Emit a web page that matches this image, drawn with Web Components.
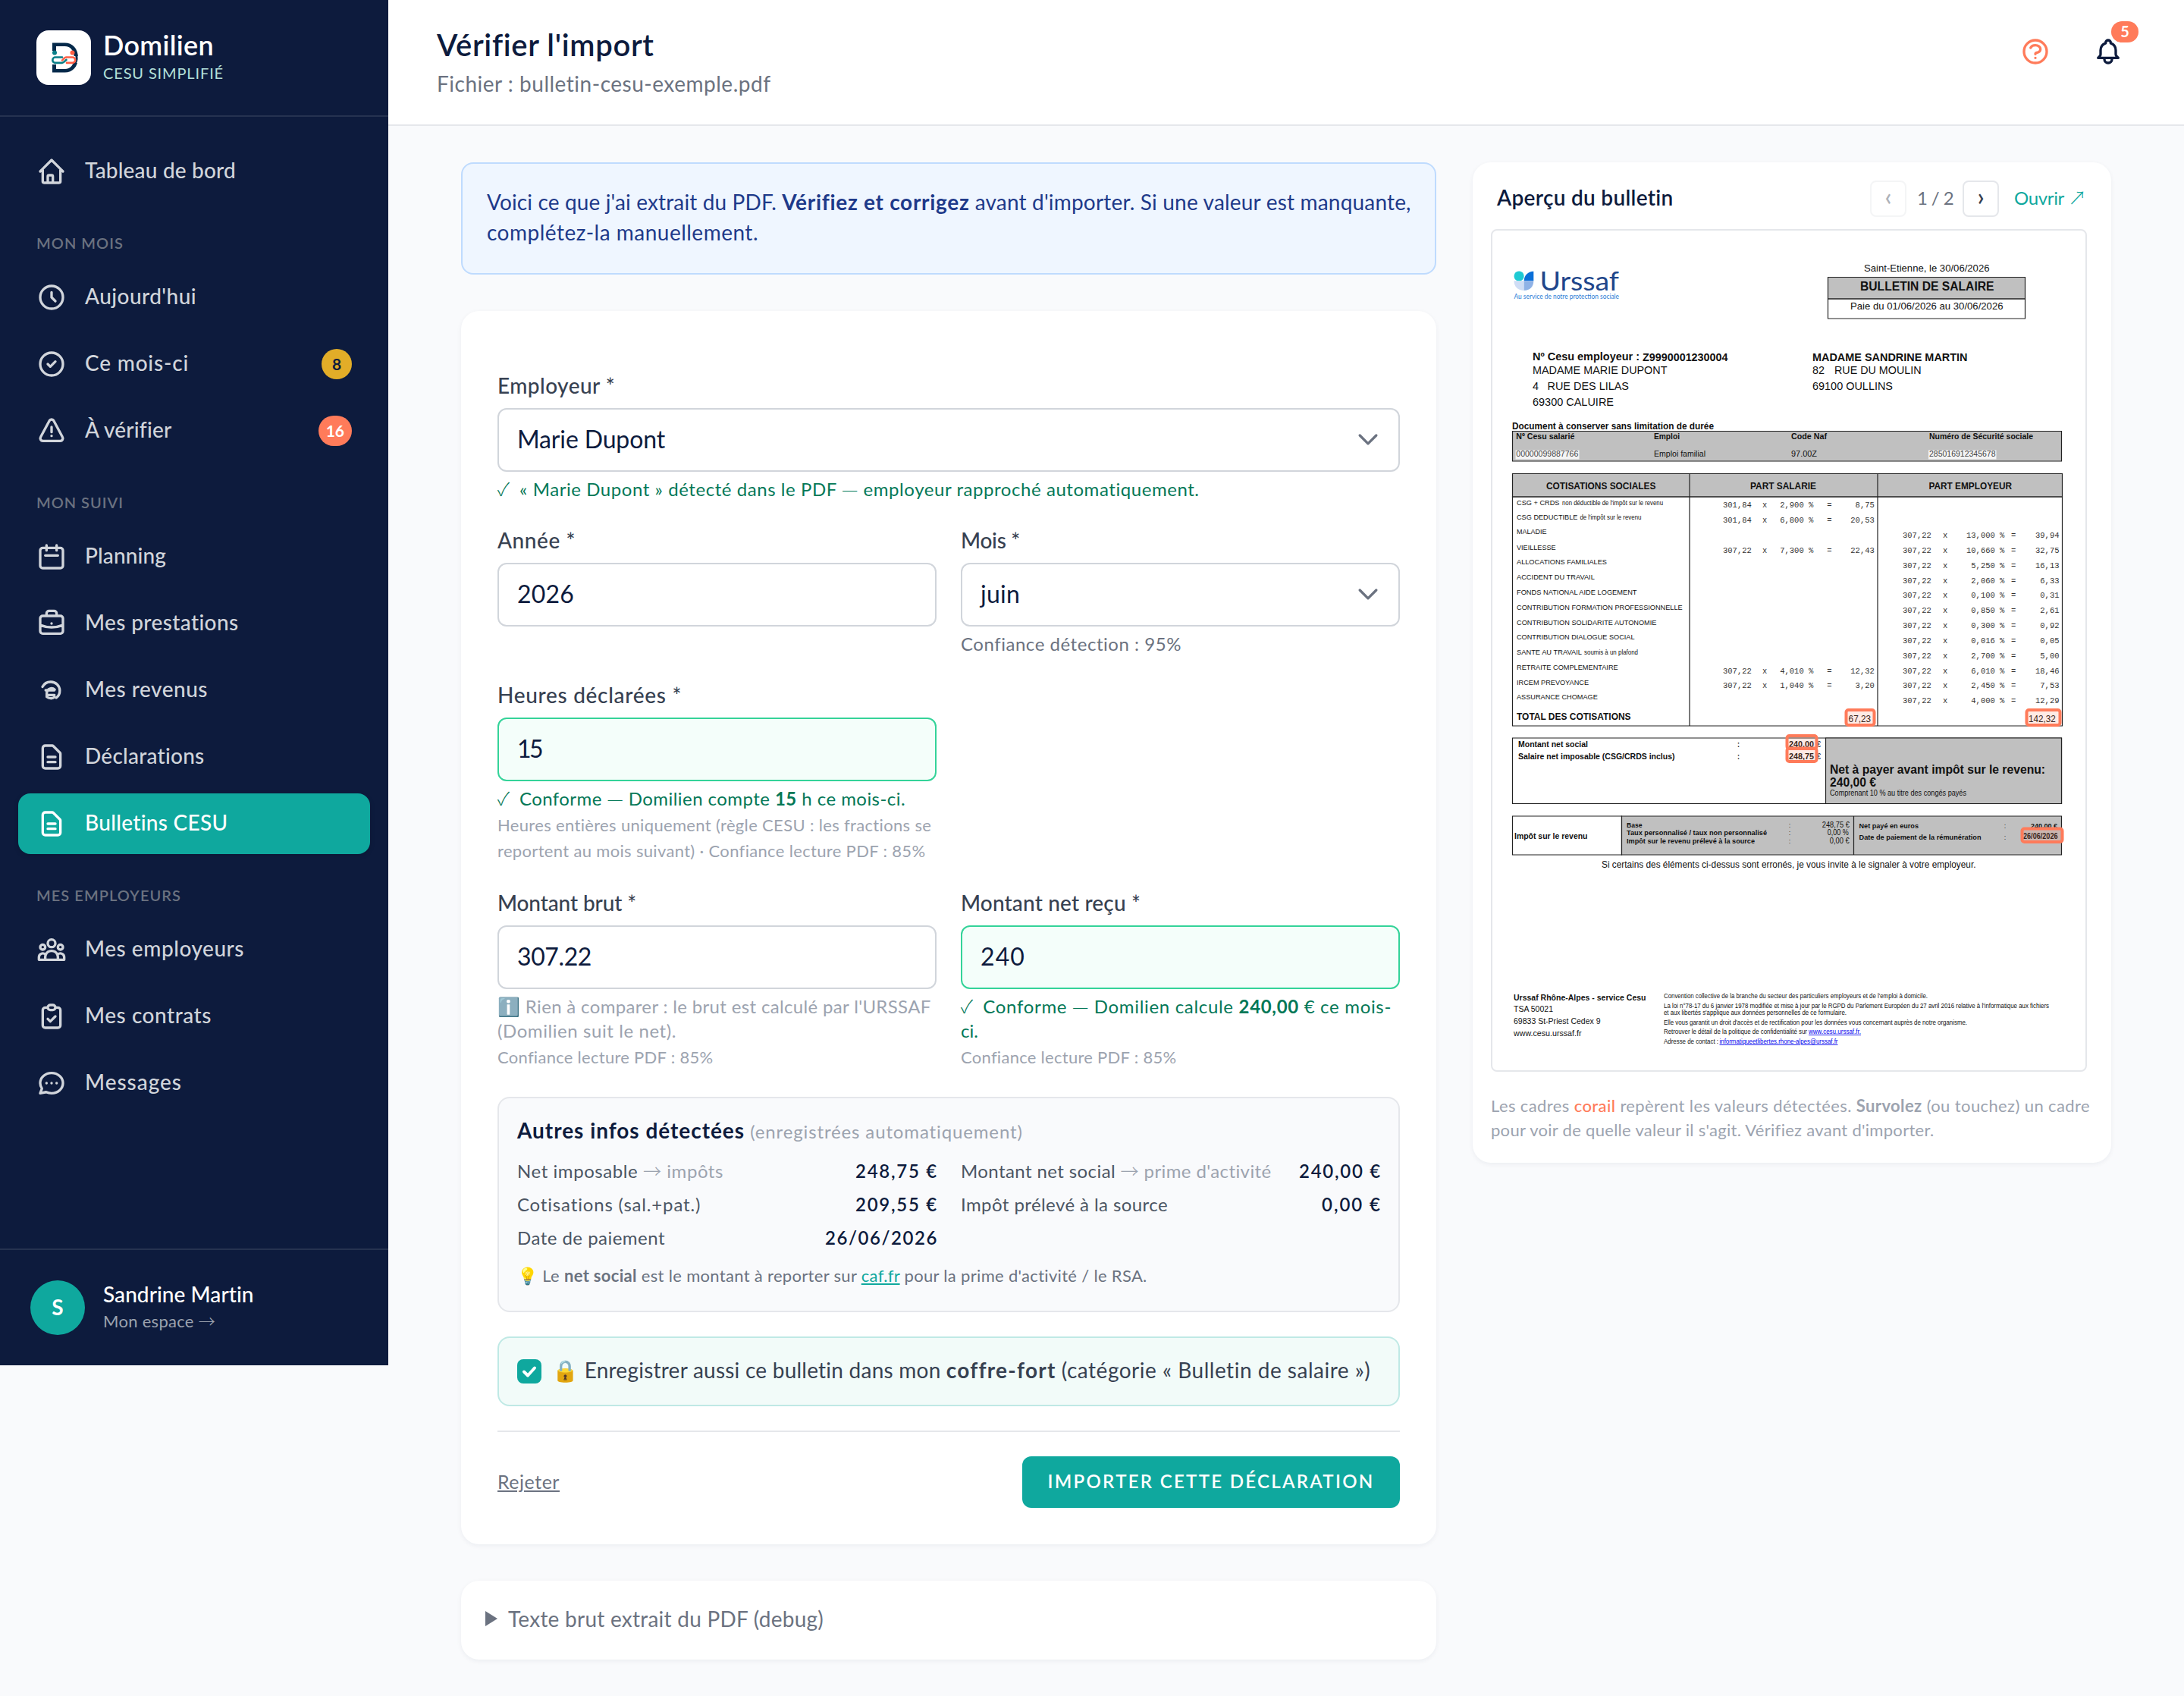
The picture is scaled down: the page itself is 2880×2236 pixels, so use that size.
<!DOCTYPE html>
<html lang="fr">
<head>
<meta charset="utf-8">
<title>Domilien - Vérifier l'import</title>
<style>
    html, body{
        margin: 0;
        background-color: #f9fafc;
    }
    body{
        --navy: #0d1b3d;
        --teal: #0fa89e;
        --coral: #ff7b5a;
        --gray-light: #9ca3af;
        --gray: #6b7280;
        --border: #e5e7eb;
        font-family: Lato, "Noto Sans", sans-serif;
        font-size: 28px;
        line-height: 40px;
        color: var(--navy);
        display: flex;
        align-items: flex-start;
    }
</style>
</head>
<body>
<app-sidebar></app-sidebar>
<app-main></app-main>

<script>
const ICONS = {
    home: "M3 12l2-2m0 0l7-7 7 7M5 10v10a1 1 0 001 1h12a1 1 0 001-1V10m0 0l2 2m-12 9v-5a1 1 0 011-1h2a1 1 0 011 1v5",
    clock: "M12 8v4l3 3m6-3a9 9 0 11-18 0 9 9 0 0118 0z",
    check: "M9 12l2 2 4-4m6 2a9 9 0 11-18 0 9 9 0 0118 0z",
    warning: "M12 9v4m0 3h.01m-6.938 4h13.856c1.54 0 2.502-1.667 1.732-3L13.732 4c-.77-1.333-2.694-1.333-3.464 0L3.34 17c-.77 1.333.192 3 1.732 3z",
    calendar: "M8 7V3m8 4V3m-9 8h10M5 21h14a2 2 0 002-2V7a2 2 0 00-2-2H5a2 2 0 00-2 2v12a2 2 0 002 2z",
    briefcase: "M21 13.255A23.931 23.931 0 0112 15c-3.183 0-6.22-.62-9-1.745M16 6V4a2 2 0 00-2-2h-4a2 2 0 00-2 2v2m4 6h.01M5 20h14a2 2 0 002-2V8a2 2 0 00-2-2H5a2 2 0 00-2 2v10a2 2 0 002 2z",
    euro: "M4.8 9.3A7.3 7.3 0 0 1 11.4 5.4A7 7 0 0 1 18.5 12.3A7 7 0 0 1 15.7 18M7.3 12h6.9M8.5 15.8h5.8M8.2 17.3V14a3.8 3.8 0 0 1 6.3-2.5M8.2 17.2c1.6 1.6 4.6 1.6 6.2.2",
    document: "M9 12h6m-6 4h6m2 5H7a2 2 0 01-2-2V5a2 2 0 012-2h5.586a1 1 0 01.707.293l5.414 5.414a1 1 0 01.293.707V19a2 2 0 01-2 2z",
    users: "M17 20h5v-2a3 3 0 00-5.356-1.857M17 20H7m10 0v-2c0-.656-.126-1.283-.356-1.857M7 20H2v-2a3 3 0 015.356-1.857M7 20v-2c0-.656.126-1.283.356-1.857m0 0a5.002 5.002 0 019.288 0M15 7a3 3 0 11-6 0 3 3 0 016 0zm6 3a2 2 0 11-4 0 2 2 0 014 0zM7 10a2 2 0 11-4 0 2 2 0 014 0z",
    clipboard: "M9 5H7a2 2 0 00-2 2v12a2 2 0 002 2h10a2 2 0 002-2V7a2 2 0 00-2-2h-2M9 5a2 2 0 002 2h2a2 2 0 002-2M9 5a2 2 0 012-2h2a2 2 0 012 2m-6 9l2 2 4-4",
    chat: "M8 12h.01M12 12h.01M16 12h.01M21 12c0 4.418-4.03 8-9 8a9.863 9.863 0 01-4.255-.949L3 20l1.395-3.72C3.512 15.042 3 13.574 3 12c0-4.418 4.03-8 9-8s9 3.582 9 8z",
    help: "M8.228 9c.549-1.165 2.03-2 3.772-2 2.21 0 4 1.343 4 3 0 1.4-1.278 2.575-3.006 2.907-.542.104-.994.54-.994 1.093m0 3h.01M21 12a9 9 0 11-18 0 9 9 0 0118 0z",
    bell: "M15 17h5l-1.405-1.405A2.032 2.032 0 0118 14.158V11a6.002 6.002 0 00-4-5.659V5a2 2 0 10-4 0v.341C7.67 6.165 6 8.388 6 11v3.159c0 .538-.214 1.055-.595 1.436L4 17h5m6 0v1a3 3 0 11-6 0v-1m6 0H9",
    chevron: "M5.500 9l6.500 6.500L18.500 9"
};

class baseElement extends HTMLElement{
    constructor(){
        super();
        this.attachShadow({mode: "open"});
    }
    render(){
        const template = document.createElement("template");
        template.innerHTML = `<style>${this.getStyles()}</style>${this.getMarkup()}`;
        this.shadowRoot.appendChild(template.content.cloneNode(true));
    }
    connectedCallback(){
        this.render();
    }
}

class uiIcon extends baseElement{
    getMarkup(){
        return `<svg viewBox="0 0 24 24"><path d="${ICONS[this.getAttribute("name")]}"/></svg>`;
    }
    getStyles(){
        return `
        :host{ display: block; width: 40px; height: 40px; flex: none; }
        svg{
            display: block;
            width: 100%;
            height: 100%;
            fill: none;
            stroke: currentColor;
            stroke-width: 2;
            stroke-linecap: round;
            stroke-linejoin: round;
        }
        `;
    }
}

class navItem extends baseElement{
    getMarkup(){
        return `
        <ui-icon name="${this.getAttribute("icon")}"></ui-icon>
        <span class="label"><slot></slot></span>
        <slot name="badge"></slot>
        `;
    }
    getStyles(){
        return `
        :host{
            display: flex;
            align-items: center;
            gap: 24px;
            height: 80px;
            box-sizing: border-box;
            padding: 0 24px;
            border-radius: 16px;
            color: #d1d5db;
        }
        :host([active]){
            background-color: var(--teal);
            color: #fff;
            box-shadow: 0 2px 6px rgba(0, 0, 0, .15);
        }
        .label{
            flex: 1;
            padding-bottom: 4px;
        }
        ::slotted([slot=badge]){
            min-width: 40px;
            height: 40px;
            box-sizing: border-box;
            padding: 0 10px;
            border-radius: 20px;
            font-size: 21px;
            line-height: 39px;
            font-weight: 700;
            text-align: center;
            background-color: var(--coral);
            color: #fff;
        }
        ::slotted(.gold){
            background-color: #e2ad28;
            color: var(--navy);
        }
        `;
    }
}

class appSidebar extends baseElement{
    getMarkup(){
        return `
        <div class="brand">
            <div class="brand__logo">
                <svg width="72" height="72" viewBox="0 0 72 72" fill="none">
                    <path d="M21 27V16.500h16.500c10 0 17.500 7.500 17.500 19.500s-7.500 19.500-17.500 19.500H21V45h5v6h11.500c7.500 0 12.300-6 12.300-15s-4.800-15-12.300-15H26v6z" fill="#04294a"/>
                    <path d="M46 34h11v9h-11z" fill="#fff"/>
                    <path d="M52 31a15 15 0 0 1-1 13" stroke="#04294a" stroke-width="3"/>
                    <circle cx="24" cy="29.500" r="3" fill="#0a7f88"/>
                    <circle cx="47.500" cy="29.500" r="3" fill="#ff5f45"/>
                    <path d="M34 35.500H25a3.700 3.700 0 0 0 0 7.400h9c2 0 4-3 5.500-4" stroke="#0a7f88" stroke-width="2.600" stroke-linecap="round"/>
                    <path d="M40 42.900h7.500a3.700 3.700 0 0 0 0-7.400H39c-2 0-3.500 3-5 4" stroke="#ff5f45" stroke-width="2.600" stroke-linecap="round"/>
                </svg>
            </div>
            <div class="brand__text">
                <div class="brand__name"><fit-text w="146">Domilien</fit-text></div>
                <div class="brand__tag"><fit-text w="159">CESU SIMPLIFIÉ</fit-text></div>
            </div>
        </div>
        <nav>
            <nav-item icon="home"><fit-text w="199">Tableau de bord</fit-text></nav-item>
            <h6><fit-text w="115">MON MOIS</fit-text></h6>
            <nav-item icon="clock"><fit-text w="147">Aujourd'hui</fit-text></nav-item>
            <nav-item icon="check"><fit-text w="137">Ce mois-ci</fit-text><b slot="badge" class="gold">8</b></nav-item>
            <nav-item icon="warning"><fit-text w="114">À vérifier</fit-text><b slot="badge">16</b></nav-item>
            <h6><fit-text w="115">MON SUIVI</fit-text></h6>
            <nav-item icon="calendar"><fit-text w="107">Planning</fit-text></nav-item>
            <nav-item icon="briefcase"><fit-text w="203">Mes prestations</fit-text></nav-item>
            <nav-item icon="euro"><fit-text w="162">Mes revenus</fit-text></nav-item>
            <nav-item icon="document"><fit-text w="158">Déclarations</fit-text></nav-item>
            <nav-item icon="document" active><fit-text w="189">Bulletins CESU</fit-text></nav-item>
            <h6><fit-text w="191">MES EMPLOYEURS</fit-text></h6>
            <nav-item icon="users"><fit-text w="210">Mes employeurs</fit-text></nav-item>
            <nav-item icon="clipboard"><fit-text w="167">Mes contrats</fit-text></nav-item>
            <nav-item icon="chat"><fit-text w="128">Messages</fit-text></nav-item>
        </nav>
        <footer>
            <div class="avatar">S</div>
            <div>
                <div class="user"><fit-text w="199">Sandrine Martin</fit-text></div>
                <div class="space"><fit-text w="148">Mon espace <ui-glyph>→</ui-glyph></fit-text></div>
            </div>
        </footer>
        `;
    }
    getStyles(){
        return `
        :host{
            display: flex;
            flex-direction: column;
            flex: none;
            width: 512px;
            height: 1800px;
            background-color: var(--navy);
            color: #fff;
        }
        .brand{
            display: flex;
            gap: 16px;
            align-items: center;
            height: 152px;
            padding: 0 48px;
            border-bottom: 2px solid rgba(255, 255, 255, .1);
        }
        .brand__logo{
            width: 72px;
            height: 72px;
            border-radius: 16px;
            background-color: #fff;
            overflow: hidden;
        }
        .brand__text{ padding-bottom: 6px; }
        .brand__name{
            font-size: 36px;
            font-weight: 600;
            line-height: 44px;
        }
        .brand__tag{
            padding-top: 1px;
            font-size: 20px;
            line-height: 28px;
            color: #b4e0da;
        }
        nav{
            flex: 1;
            display: flex;
            flex-direction: column;
            gap: 8px;
            padding: 32px 24px 0;
            font-weight: 500;
        }
        h6{
            margin: 0;
            box-sizing: border-box;
            height: 70px;
            padding: 26px 24px 0;
            font-size: 20px;
            font-weight: 600;
            color: var(--gray);
        }
        footer{
            display: flex;
            gap: 24px;
            align-items: center;
            box-sizing: border-box;
            height: 154px;
            padding: 0 40px;
            border-top: 2px solid rgba(255, 255, 255, .1);
        }
        .avatar{
            width: 72px;
            height: 72px;
            border-radius: 50%;
            background-color: var(--teal);
            font-weight: 700;
            line-height: 70px;
            text-align: center;
        }
        .user{
            line-height: 36px;
            font-weight: 500;
        }
        .space{
            font-size: 22px;
            line-height: 36px;
            color: #9ca3af;
        }
        `;
    }
}

class appHeader extends baseElement{
    getMarkup(){
        return `
        <div>
            <h1><fit-text w="286"><slot></slot></fit-text></h1>
            <p><fit-text w="441"><slot name="subtitle"></slot></fit-text></p>
        </div>
        <div class="actions">
            <ui-icon class="help" name="help"></ui-icon>
            <div class="bell"><ui-icon name="bell"></ui-icon><b>5</b></div>
        </div>
        `;
    }
    getStyles(){
        return `
        :host{
            display: flex;
            justify-content: space-between;
            box-sizing: border-box;
            height: 166px;
            padding: 31px 80px 0 64px;
            background-color: #fff;
            border-bottom: 2px solid var(--border);
        }
        h1{
            margin: 0 0 3px;
            font-size: 40px;
            font-weight: 600;
            line-height: 56px;
        }
        p{ margin: 0; color: var(--gray); }
        .actions{
            display: flex;
            gap: 56px;
            padding-top: 17px;
        }
        .help{ color: var(--coral); }
        .bell{ position: relative; }
        b{
            position: absolute;
            left: 24px;
            top: -20px;
            width: 36px;
            height: 28px;
            border-radius: 14px;
            background-color: var(--coral);
            color: #fff;
            font-size: 20px;
            line-height: 26px;
            text-align: center;
        }
        `;
    }
}

class formField extends baseElement{
    getMarkup(){
        const select = this.hasAttribute("select") ? `<ui-icon name="chevron"></ui-icon>` : "";
        return `
        <label><slot name="label"></slot></label>
        <div class="input"><fit-text w="${this.getAttribute("vw")}">${this.getAttribute("value")}</fit-text>${select}</div>
        <div class="hints"><slot></slot></div>
        `;
    }
    getStyles(){
        return `
        :host{ display: block; }
        label{
            display: block;
            height: 40px;
            padding-top: 2px;
            margin-bottom: 10px;
            color: #374151;
            font-weight: 500;
        }
        .input{
            display: flex;
            align-items: center;
            justify-content: space-between;
            box-sizing: border-box;
            height: 84px;
            padding: 0 20px 2px 24px;
            border: 2px solid #d1d5db;
            border-radius: 12px;
            background-color: #fff;
            font-size: 32px;
        }
        :host([valid]) .input{
            border-color: #34d399;
            background-color: #f4fefa;
        }
        ui-icon{ color: var(--gray); }
        .hints{
            margin-top: 7px;
            font-size: 24px;
            line-height: 32px;
            color: var(--gray);
        }
        ::slotted(.ok){ color: #047857; }
        ::slotted(.mute){ color: var(--gray-light); }
        ::slotted(.small){
            color: var(--gray-light);
            font-size: 22px;
            line-height: 34px;
            padding-top: 2px;
            margin-bottom: -2px;
        }
        `;
    }
}

class infoRow extends baseElement{
    getMarkup(){
        return `<span><slot></slot></span><b><slot name="value"></slot></b>`;
    }
    getStyles(){
        return `
        :host{
            display: flex;
            justify-content: space-between;
            font-size: 24px;
            line-height: 36px;
            color: #4b5563;
        }
        b{ color: var(--navy); font-weight: 600; margin-right: -2px; }
        `;
    }
}

class uiCard extends baseElement{
    getMarkup(){
        return `<slot></slot>`;
    }
    getStyles(){
        return `
        :host{
            display: block;
            box-sizing: border-box;
            border-radius: 24px;
            background-color: #fff;
            box-shadow: 0 2px 6px rgba(13, 27, 61, .06);
        }
        `;
    }
}

class importForm extends baseElement{
    getMarkup(){
        return `
        <div class="fields">
            <form-field class="wide" value="Marie Dupont" vw="195" select>
                <fit-text slot="label" w="155">Employeur *</fit-text>
                <div class="ok"><fit-text w="926"><ui-glyph tick>✓</ui-glyph> « Marie Dupont » détecté dans le PDF <ui-glyph>—</ui-glyph> employeur rapproché automatiquement.</fit-text></div>
            </form-field>
            <form-field value="2026" vw="75">
                <fit-text slot="label" w="103">Année *</fit-text>
            </form-field>
            <form-field value="juin" vw="52" select>
                <fit-text slot="label" w="78">Mois *</fit-text>
                <div><fit-text w="291">Confiance détection : 95%</fit-text></div>
            </form-field>
            <form-field value="15" vw="32" valid>
                <fit-text slot="label" w="243">Heures déclarées *</fit-text>
                <div class="ok"><fit-text w="538"><ui-glyph tick>✓</ui-glyph> Conforme <ui-glyph>—</ui-glyph> Domilien compte <b>15</b> h ce mois-ci.</fit-text></div>
                <div class="small"><fit-text w="573">Heures entières uniquement (règle CESU : les fractions se</fit-text></div>
                <div class="small"><fit-text w="564">reportent au mois suivant) · Confiance lecture PDF : 85%</fit-text></div>
            </form-field>
            <span></span>
            <form-field value="307.22" vw="98">
                <fit-text slot="label" w="183">Montant brut *</fit-text>
                <div class="mute"><fit-text w="572">ℹ️ Rien à comparer : le brut est calculé par l'URSSAF</fit-text></div>
                <div class="mute"><fit-text w="236">(Domilien suit le net).</fit-text></div>
                <div class="small"><fit-text w="284">Confiance lecture PDF : 85%</fit-text></div>
            </form-field>
            <form-field value="240" vw="59" valid>
                <fit-text slot="label" w="237">Montant net reçu *</fit-text>
                <div class="ok"><fit-text w="568"><ui-glyph tick>✓</ui-glyph> Conforme <ui-glyph>—</ui-glyph> Domilien calcule <b>240,00</b> € ce mois-</fit-text></div>
                <div class="ok"><fit-text w="23">ci.</fit-text></div>
                <div class="small"><fit-text w="284">Confiance lecture PDF : 85%</fit-text></div>
            </form-field>
        </div>
        <section class="infos">
            <div class="infos__title"><b><fit-text w="300">Autres infos détectées</fit-text></b> <span><fit-text w="360">(enregistrées automatiquement)</fit-text></span></div>
            <div class="infos__grid">
                <info-row><fit-text w="272">Net imposable <i><ui-glyph>→</ui-glyph> impôts</i></fit-text><fit-text slot="value" w="109">248,75 €</fit-text></info-row>
                <info-row><fit-text w="410">Montant net social <i><ui-glyph>→</ui-glyph> prime d'activité</i></fit-text><fit-text slot="value" w="109">240,00 €</fit-text></info-row>
                <info-row><fit-text w="243">Cotisations (sal.+pat.)</fit-text><fit-text slot="value" w="109">209,55 €</fit-text></info-row>
                <info-row><fit-text w="273">Impôt prélevé à la source</fit-text><fit-text slot="value" w="79">0,00 €</fit-text></info-row>
                <info-row><fit-text w="195">Date de paiement</fit-text><fit-text slot="value" w="149">26/06/2026</fit-text></info-row>
            </div>
            <div class="infos__hint"><fit-text w="831">💡 Le <b>net social</b> est le montant à reporter sur <a>caf.fr</a> pour la prime d'activité / le RSA.</fit-text></div>
        </section>
        <section class="vault">
            <svg width="32" height="32" viewBox="0 0 32 32">
                <rect width="32" height="32" rx="8" fill="#0fa89e"/>
                <path d="M9 16.500l5 5 9-10" fill="none" stroke="#fff" stroke-width="4" stroke-linecap="round" stroke-linejoin="round"/>
            </svg>
            <div><fit-text w="513">🔒 Enregistrer aussi ce bulletin dans mon</fit-text> <b><fit-text w="144">coffre-fort</fit-text></b> <fit-text w="408">(catégorie « Bulletin de salaire »)</fit-text></div>
        </section>
        <div class="actions">
            <a class="reject"><fit-text w="82"><u>Rejeter</u></fit-text></a>
            <button><fit-text w="431">IMPORTER CETTE DÉCLARATION</fit-text></button>
        </div>
        `;
    }
    getStyles(){
        return `
        :host{
            display: block;
            padding: 76px 48px 48px;
        }
        .fields{
            display: grid;
            grid-template-columns: 1fr 1fr;
            grid-template-rows: 176px 176px 246px 244px;
            gap: 28px 32px;
        }
        .wide{ grid-column: span 2; }
        .infos{
            box-sizing: border-box;
            height: 284px;
            margin-top: 34px;
            padding: 22px 24px;
            border: 2px solid var(--border);
            border-radius: 16px;
            background-color: #f9fafc;
        }
        .infos__title b{ font-weight: 700; }
        .infos__title span{ font-size: 24px; color: var(--gray-light); }
        .infos__grid{
            display: grid;
            grid-template-columns: 1fr 1fr;
            gap: 8px 32px;
            margin-top: 14px;
        }
        i{ font-style: normal; color: var(--gray-light); }
        .infos__hint{
            margin-top: 16px;
            font-size: 22px;
            line-height: 32px;
            color: var(--gray);
        }
        .infos__hint a{ color: var(--teal); text-decoration: underline; }
        .vault{
            display: flex;
            align-items: center;
            gap: 14px;
            box-sizing: border-box;
            height: 92px;
            margin-top: 32px;
            padding: 0 24px;
            border: 2px solid #bfe9e5;
            border-radius: 16px;
            background-color: #f2fbf9;
            color: #374151;
            white-space: nowrap;
        }
        .vault div{ padding-bottom: 4px; }
        .actions{
            display: flex;
            align-items: center;
            justify-content: space-between;
            margin-top: 32px;
            padding-top: 32px;
            border-top: 2px solid var(--border);
        }
        .reject{
            font-size: 25px;
            padding-bottom: 2px;
            color: var(--gray);
        }
        button{
            width: 498px;
            height: 68px;
            padding: 0 0 2px;
            border: none;
            border-radius: 12px;
            background-color: var(--teal);
            color: #fff;
            font: 600 24px/36px Lato, sans-serif;
        }
        `;
    }
}

// Ticks, arrows and dashes, in a face with thin full-width symbols
class uiGlyph extends baseElement{
    getMarkup(){
        return `<slot></slot>`;
    }
    getStyles(){
        return `
        :host{
            font-family: "Noto Sans CJK JP", sans-serif;
            font-weight: 300;
            line-height: 0;
        }
        :host([tick]){ margin-right: 6px; }
        `;
    }
}

class uiBanner extends baseElement{
    getMarkup(){
        return `<slot></slot>`;
    }
    getStyles(){
        return `
        :host{
            display: block;
            box-sizing: border-box;
            height: 148px;
            padding: 30px 32px 0;
            border: 2px solid #bfdbfe;
            border-radius: 16px;
            background-color: #eff6ff;
            color: #1e3a8a;
            white-space: nowrap;
        }
        `;
    }
}

class previewPanel extends baseElement{
    getMarkup(){
        return `
        <header>
            <h2><fit-text w="233">Aperçu du bulletin</fit-text></h2>
            <span class="page off">‹</span>
            <span class="count"><fit-text w="48">1 / 2</fit-text></span>
            <span class="page">›</span>
            <a><fit-text w="95">Ouvrir <ui-glyph>↗</ui-glyph></fit-text></a>
        </header>
        <pay-slip></pay-slip>
        <p><fit-text w="790">Les cadres <em>corail</em> repèrent les valeurs détectées. <b>Survolez</b> (ou touchez) un cadre</fit-text></p>
        <p><fit-text w="584">pour voir de quelle valeur il s'agit. Vérifiez avant d'importer.</fit-text></p>
        `;
    }
    getStyles(){
        return `
        :host{ display: block; padding: 24px 32px 27px 24px; }
        header{
            display: flex;
            align-items: center;
            margin: 0 0 16px 8px;
            font-size: 24px;
        }
        h2{
            flex: 1;
            margin: 0;
            padding-bottom: 4px;
            font-size: 28px;
            font-weight: 600;
        }
        .page{
            box-sizing: border-box;
            width: 48px;
            height: 48px;
            border: 2px solid var(--border);
            border-radius: 8px;
            font-size: 32px;
            line-height: 38px;
            text-align: center;
            font-weight: 600;
            color: #374151;
        }
        .off{ opacity: .4; }
        .count{ margin: 0 12px 2px 14px; color: var(--gray); }
        a{
            width: 96px;
            margin: 0 0 2px 20px;
            color: var(--teal);
        }
        pay-slip{ margin-bottom: 29px; }
        p{
            margin: 0;
            font-size: 22px;
            line-height: 32px;
            color: var(--gray-light);
        }
        em{ font-style: normal; font-weight: 500; color: var(--coral); }
        `;
    }
}

// x, baseline, width, size, text, classes
const SLIP_TEXTS = [
    [2030.5, 382.8, 104.5, 35, "Urssaf", "brand"],
    [1996.5, 394.3, 138.5, 9.5, "Au service de notre protection sociale", "brand light"],
    [2458, 358.3, 165.5, 13.5, "Saint-Etienne, le 30/06/2026"],
    [2453, 383, 176.5, 15.8, "BULLETIN DE SALAIRE", "b"],
    [2440, 408.3, 201.5, 13.5, "Paie du 01/06/2026 au 30/06/2026"],
    [2021, 475, 141, 14.2, "Nº Cesu employeur :", "b"],
    [2166, 475.5, 112.5, 14, "Z9990001230004", "b"],
    [2021, 493.3, 177.5, 14.3, "MADAME MARIE DUPONT"],
    [2021, 513.7, 8, 14.3, "4"],
    [2040.5, 513.7, 107.5, 14.3, "RUE DES LILAS"],
    [2021, 534.7, 107, 14.3, "69300 CALUIRE"],
    [2390, 475.5, 204.5, 14, "MADAME SANDRINE MARTIN", "b"],
    [2390, 493.3, 16, 14.3, "82"],
    [2419, 493.3, 114.5, 14.3, "RUE DU MOULIN"],
    [2390, 513.7, 106, 14.3, "69100 OULLINS"],
    [1994, 566.3, 266, 12.2, "Document à conserver sans limitation de durée", "b"],
    [1999.3, 579.3, 77, 10.5, "Nº Cesu salarié", "b"],
    [2181, 579.3, 34, 10.5, "Emploi", "b"],
    [2362, 579.3, 47, 10.5, "Code Naf", "b"],
    [2544, 579.3, 137, 10.8, "Numéro de Sécurité sociale", "b"],
    [1999.3, 602.3, 82, 10.8, "00000099887766", "soft"],
    [2181, 602.3, 68, 10.8, "Emploi familial"],
    [2362, 602.3, 34, 10.8, "97.00Z"],
    [2544, 602.3, 87.5, 10.8, "285016912345678", "soft"],
    [2039, 645, 144.4, 12.3, "COTISATIONS SOCIALES", "b"],
    [2308, 645, 87, 12.3, "PART SALARIE", "b"],
    [2543.5, 645, 109.5, 12.3, "PART EMPLOYEUR", "b"],
    [2000, 949.3, 150.6, 13, "TOTAL DES COTISATIONS", "b"],
    [2437.6, 952, 29.4, 12, "67,23"],
    [2675, 952, 35.7, 12, "142,32"],
    [2002, 985, 92, 11.3, "Montant net social", "b"],
    [2291, 985, 3, 11.3, ":", "b"],
    [2359, 985, 33, 11.3, "240,00", "b"],
    [2396, 985, 5, 10, "€"],
    [2002, 1001.3, 206.5, 11.3, "Salaire net imposable (CSG/CRDS inclus)", "b"],
    [2291, 1001.3, 3, 11.3, ":", "b"],
    [2359, 1001.3, 33, 11.3, "248,75", "b"],
    [2396, 1001.3, 5, 10, "€"],
    [2413, 1020.3, 284, 16.5, "Net à payer avant impôt sur le revenu:", "b"],
    [2413, 1037, 61, 16, "240,00 €", "b"],
    [2413, 1049, 180, 10.4, "Comprenant 10 % au titre des congés payés"],
    [1997, 1105.7, 96.5, 11, "Impôt sur le revenu", "b"],
    [2145, 1091, 20.5, 9.8, "Base", "b"],
    [2145, 1101, 185, 9.8, "Taux personnalisé / taux non personnalisé", "b"],
    [2145, 1112, 169, 9.8, "Impôt sur le revenu prélevé à la source", "b"],
    [2359, 1091, 2, 9.8, ":"],
    [2359, 1101, 2, 9.8, ":"],
    [2359, 1112, 2, 9.8, ":"],
    [2402.8, 1091, 36, 10, "248,75 €"],
    [2409.8, 1101, 28, 10, "0,00 %"],
    [2412.8, 1112, 26, 10, "0,00 €"],
    [2451.5, 1091.7, 78.5, 9.8, "Net payé en euros", "b"],
    [2451.5, 1106.7, 161, 9.8, "Date de paiement de la rémunération", "b"],
    [2643, 1091.7, 2, 9.8, ":"],
    [2643, 1106.7, 2, 9.8, ":"],
    [2678, 1091.7, 35, 9.8, "240,00 €", "b"],
    [2668, 1106, 45.5, 10, "26/06/2026", "b"],
    [2112, 1143.7, 493.5, 12.3, "Si certains des éléments ci-dessus sont erronés, je vous invite à le signaler à votre employeur."],
    [1996, 1319, 174.5, 11.6, "Urssaf Rhône-Alpes - service Cesu", "b"],
    [1996, 1333.7, 52, 11.3, "TSA 50021"],
    [1996, 1349.7, 114.6, 11.3, "69833 St-Priest Cedex 9"],
    [1996, 1365.7, 89.5, 11.3, "www.cesu.urssaf.fr"],
    [2194, 1316.3, 348, 8.6, "Convention collective de la branche du secteur des particuliers employeurs et de l'emploi à domicile."],
    [2194, 1328.6, 508, 8.6, "La loi n°78-17 du 6 janvier 1978 modifiée et mise à jour par le RGPD du Parlement Européen du 27 avril 2016 relative à l'informatique aux fichiers"],
    [2194, 1338.3, 241, 8.6, "et aux libertés s'applique aux données personnelles de ce formulaire."],
    [2194, 1351, 400, 8.6, "Elle vous garantit un droit d'accès et de rectification pour les données vous concernant auprès de notre organisme."],
    [2194, 1363, 189, 8.6, "Retrouver le détail de la politique de confidentialité sur"],
    [2385, 1363, 69, 8.6, "www.cesu.urssaf.fr.", "link"],
    [2194, 1376, 72, 8.6, "Adresse de contact :"],
    [2267.5, 1376, 156, 8.6, "informatiqueetlibertes.rhone-alpes@urssaf.fr", "link"]
];

// label, baseline, width, small print with its x and width
const SLIP_LABELS = [
    ["CSG + CRDS", 665.7, 56.5, "non déductible de l'impôt sur le revenu", 2060, 133],
    ["CSG DEDUCTIBLE", 685, 80.4, "de l'impôt sur le revenu", 2083.4, 81],
    ["MALADIE", 704, 39.6],
    ["VIEILLESSE", 725, 51.6],
    ["ALLOCATIONS FAMILIALES", 743.7, 119],
    ["ACCIDENT DU TRAVAIL", 764, 102.8],
    ["FONDS NATIONAL AIDE LOGEMENT", 783.7, 158.5],
    ["CONTRIBUTION FORMATION PROFESSIONNELLE", 803.7, 218.7],
    ["CONTRIBUTION SOLIDARITE AUTONOMIE", 823.7, 184.4],
    ["CONTRIBUTION DIALOGUE SOCIAL", 842.7, 155.5],
    ["SANTE AU TRAVAIL", 863.3, 86, "soumis à un plafond", 2089, 71],
    ["RETRAITE COMPLEMENTAIRE", 883.3, 133.7],
    ["IRCEM PREVOYANCE", 903.3, 95],
    ["ASSURANCE CHOMAGE", 922.3, 106.8]
];

const SLIP_EMPLOYEE = [
    [669, "301,84", "2,900 %", "8,75"],
    [689, "301,84", "6,800 %", "20,53"],
    [729, "307,22", "7,300 %", "22,43"],
    [887.7, "307,22", "4,010 %", "12,32"],
    [907.3, "307,22", "1,040 %", "3,20"]
];

const SLIP_EMPLOYER = [
    [709, "307,22", "13,000 %", "39,94"],
    [729, "307,22", "10,660 %", "32,75"],
    [749, "307,22", "5,250 %", "16,13"],
    [769, "307,22", "2,060 %", "6,33"],
    [788, "307,22", "0,100 %", "0,31"],
    [808, "307,22", "0,850 %", "2,61"],
    [828, "307,22", "0,300 %", "0,92"],
    [847.7, "307,22", "0,016 %", "0,05"],
    [867.7, "307,22", "2,700 %", "5,00"],
    [887.7, "307,22", "6,010 %", "18,46"],
    [907.3, "307,22", "2,450 %", "7,53"],
    [927.3, "307,22", "4,000 %", "12,29"]
];

class paySlip extends baseElement{
    text([x, y, w, size, str, cls = ""]){
        return `<text x="${x}" y="${y}" font-size="${size}" textLength="${w}" lengthAdjust="spacingAndGlyphs" class="${cls}">${str}</text>`;
    }
    label([str, y, w, small, sx, sw]){
        const first = this.text([2000, y, w, 9.6, str]);
        return small ? first + this.text([sx, y, sw, 8.6, small]) : first;
    }
    mono(end, y, str){
        const w = str.length * 6.3;
        return this.text([end - w, y, w, 10.4, str, "mono"]);
    }
    calc([y, base, rate, sum], xs){
        return [base, "x", rate, "=", sum].map((str, i) => this.mono(xs[i], y, str)).join("");
    }
    getMarkup(){
        const employee = SLIP_EMPLOYEE.map(row => this.calc(row, [2309.8, 2330.3, 2391.3, 2415.5, 2471.8])).join("");
        const employer = SLIP_EMPLOYER.map(row => this.calc(row, [2546.8, 2568.4, 2643.4, 2658.4, 2715.5])).join("");
        return `
        <svg viewBox="1968 304 782 1107" width="782" height="1107">
            <circle cx="2003.100" cy="364" r="6.600" fill="#1ecad3"/>
            <path d="M2022.300 357.700v12.600h-12.600c0-7 5-12.600 12.600-12.600z" fill="#0a6fd8"/>
            <path d="M1996.500 370.300h13.200v12.700c-8 0-13.200-5-13.200-12.700z" fill="#cfddf5"/>
            <path d="M2022.300 370.300h-12.600v12.700c7.800 0 12.600-5 12.600-12.700z" fill="#8fb2e6"/>
            <g class="box">
                <path class="fill" d="M2410.500 365.500h260v28.500h-260z"/>
                <path d="M2410.500 394h260v26h-260z"/>
                <path class="fill" d="M1994.500 568.500h724v39.500h-724z"/>
                <path class="fill" d="M1994.500 624.500h725v30.500h-725z"/>
                <path d="M1994.500 655h725v302h-725zM2228 624.500V957M2476 624.500V957"/>
                <path d="M1994.500 973h724v86.500h-724z"/>
                <path class="fill" d="M2407.500 973h311v86.500h-311z"/>
                <path d="M1994.500 1076h144v51h-144z"/>
                <path class="fill" d="M2138.500 1076h580v51h-580zM2444.500 1076v51"/>
            </g>
            <path d="M1998.500 593.500h84v12h-84zM2543 593.500h89.500v12h-89.500z" fill="#f4f4f4"/>
            ${SLIP_TEXTS.map(row => this.text(row)).join("")}
            ${SLIP_LABELS.map(row => this.label(row)).join("")}
            ${employee}
            ${employer}
            <g class="mark">
                <rect x="2434.500" y="936" width="37" height="20" rx="3"/>
                <rect x="2672.500" y="936" width="44" height="20" rx="3"/>
                <rect x="2356.500" y="970" width="39" height="17" rx="3"/>
                <rect x="2356.500" y="986.500" width="39" height="17.500" rx="3"/>
                <rect x="2666.500" y="1092.500" width="53" height="17.500" rx="3"/>
            </g>
        </svg>
        `;
    }
    getStyles(){
        return `
        :host{
            display: block;
            width: 782px;
            height: 1107px;
            border: 2px solid var(--border);
            border-radius: 8px;
            overflow: hidden;
            background-color: #fff;
        }
        svg{
            display: block;
            font-family: "Liberation Sans", Arial, sans-serif;
        }
        text{ fill: #111; }
        .b{ font-weight: 700; }
        .soft{ fill: #444; }
        .mono{ font-family: "Liberation Mono", monospace; fill: #333; }
        .link{ fill: #0000ee; text-decoration: underline; }
        .brand{ font-family: Lato, sans-serif; fill: #21468b; }
        .light{ fill: #2b7cd6; }
        .box path{ fill: none; stroke: #222; stroke-width: 1.2; }
        .box .fill{ fill: #c0c0c0; }
        .mark rect{
            fill: rgba(255, 123, 90, .16);
            stroke: var(--coral);
            stroke-width: 4;
        }
        `;
    }
}

class appMain extends baseElement{
    getMarkup(){
        return `
        <app-header>Vérifier l'import<span slot="subtitle">Fichier : bulletin-cesu-exemple.pdf</span></app-header>
        <main>
            <div class="column">
                <ui-banner>
                    <fit-text w="382">Voici ce que j'ai extrait du PDF.</fit-text>
                    <b><fit-text w="247">Vérifiez et corrigez</fit-text></b>
                    <fit-text w="575">avant d'importer. Si une valeur est manquante,</fit-text>
                    <br>
                    <fit-text w="358">complétez-la manuellement.</fit-text>
                </ui-banner>
                <ui-card><import-form></import-form></ui-card>
                <ui-card class="debug">
                    <svg width="18" height="20" viewBox="0 0 18 20"><path d="M1 0l16 10L1 20z" fill="currentColor"/></svg>
                    <fit-text w="416">Texte brut extrait du PDF (debug)</fit-text>
                </ui-card>
            </div>
            <ui-card class="preview"><preview-panel></preview-panel></ui-card>
        </main>
        `;
    }
    getStyles(){
        return `
        :host{ display: block; flex: 1; }
        main{
            display: grid;
            grid-template-columns: 1286px 842px;
            gap: 48px;
            align-items: start;
            padding: 48px 96px;
        }
        .column{
            display: flex;
            flex-direction: column;
            gap: 48px;
        }
        .debug{
            display: flex;
            align-items: center;
            gap: 13px;
            height: 104px;
            padding: 0 31px 4px;
            color: var(--gray);
        }
        `;
    }
}

// Spreads its text evenly over the width given in the "w" attribute
class fitText extends baseElement{
    getMarkup(){
        return `<slot></slot>`;
    }
    getStyles(){
        return `:host{ display: inline-block; white-space: nowrap; }`;
    }
    getChars(){
        const nodes = [...this.childNodes].flatMap(node => node.assignedNodes ? node.assignedNodes() : [node]);
        return [...nodes.map(node => node.textContent).join("").trim().replace(/\s+/g, " ")].length;
    }
    render(){
        super.render();
        const width = Number(this.getAttribute("w"));
        const natural = this.getBoundingClientRect().width;
        const chars = this.getChars();
        if(width && natural && chars){
            this.style.letterSpacing = `${(width - natural) / chars}px`;
        }
    }
}

customElements.define("ui-icon", uiIcon);
customElements.define("ui-glyph", uiGlyph);
customElements.define("ui-card", uiCard);
customElements.define("ui-banner", uiBanner);
customElements.define("nav-item", navItem);
customElements.define("form-field", formField);
customElements.define("info-row", infoRow);
customElements.define("pay-slip", paySlip);
customElements.define("preview-panel", previewPanel);
customElements.define("import-form", importForm);
customElements.define("app-header", appHeader);
customElements.define("app-sidebar", appSidebar);
customElements.define("app-main", appMain);
customElements.define("fit-text", fitText);
</script>
</body>
</html>
